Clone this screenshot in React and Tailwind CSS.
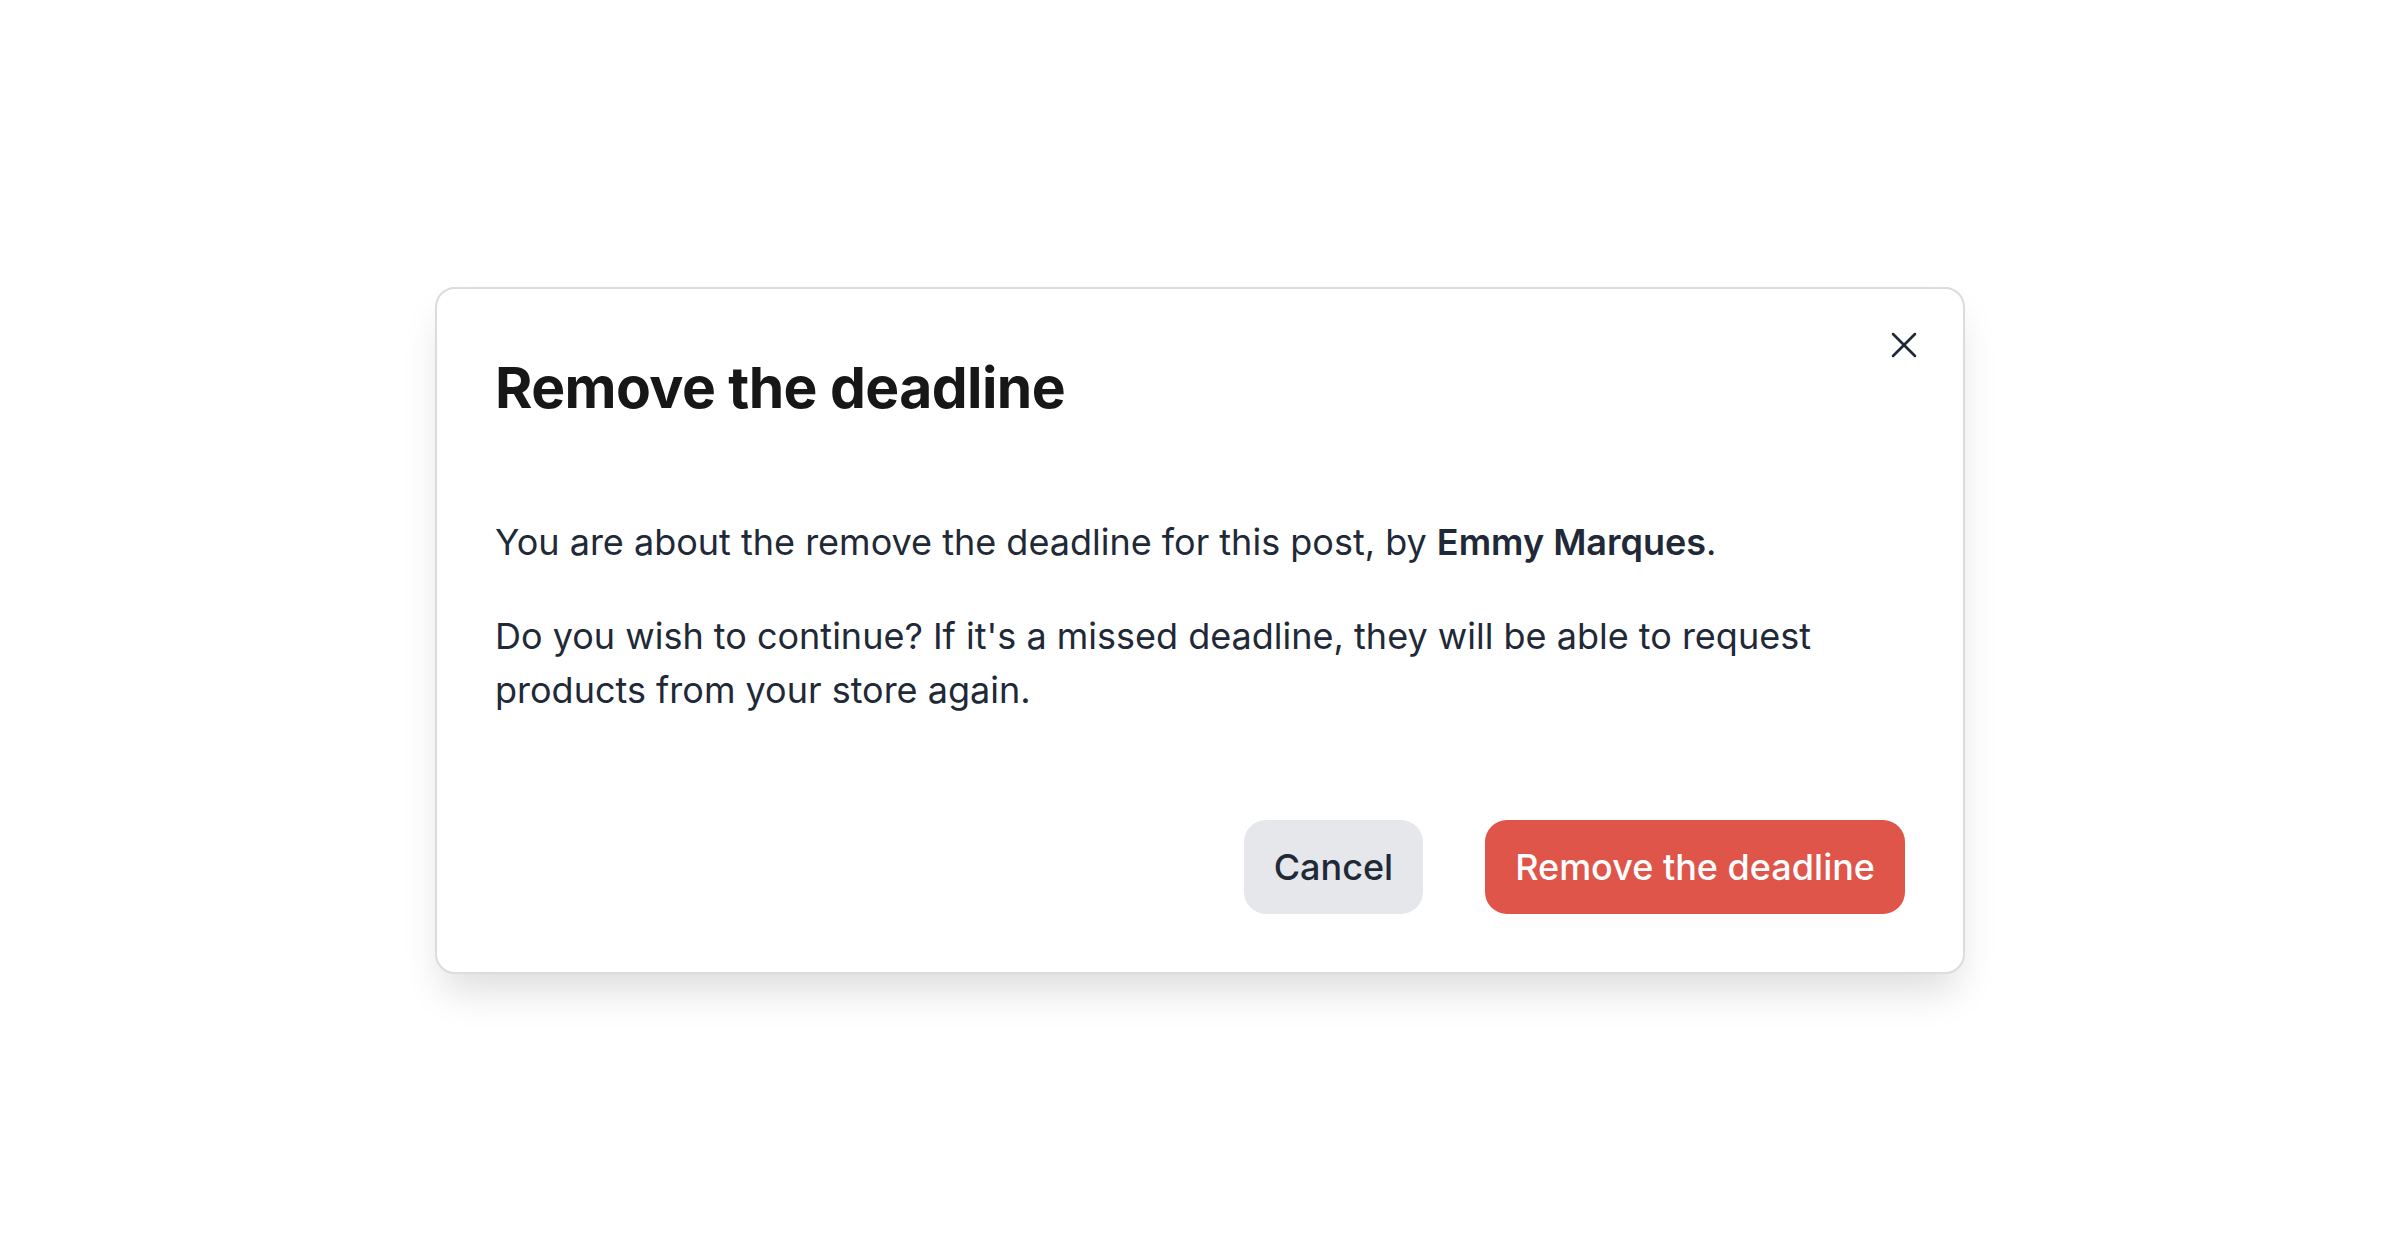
import { X } from 'lucide-react'

export default function App() {
  return (
    <div className="flex min-h-screen items-center justify-center bg-white font-['Inter',sans-serif]">
      <div className="relative w-[1530px] rounded-[20px] border-2 border-[#dcdcdc] bg-white px-[58px] pb-[58px] pt-[58px] shadow-[0_24px_40px_-8px_rgba(0,0,0,0.14)]">
        <button
          type="button"
          className="absolute right-[37px] top-[34px] text-[#1f2937]"
          aria-label="Close"
        >
          <X size={44} strokeWidth={1.4} />
        </button>

        <h2 className="mt-[5px] text-[57px] font-bold leading-[72px] tracking-[-0.01em] text-[#171717]">
          Remove the deadline
        </h2>

        <div className="mt-[91px] text-[36px] leading-[54px] text-[#1f2937]">
          <p>
            You are about the remove the deadline for this post, by{' '}
            <span className="font-semibold">Emmy Marques</span>.
          </p>
          <p className="mt-[40px]">
            Do you wish to continue? If it's a missed deadline, they will be able to request products from your store again.
          </p>
        </div>

        <div className="mt-[103px] flex justify-end gap-[62px]">
          <button
            type="button"
            className="h-[94px] rounded-[22px] bg-[#e5e7eb] px-[30px] text-[36px] font-medium text-[#1f2937]"
          >
            Cancel
          </button>
          <button
            type="button"
            className="h-[94px] rounded-[22px] bg-[#e0554a] px-[30px] text-[36px] font-medium text-white"
          >
            Remove the deadline
          </button>
        </div>
      </div>
    </div>
  )
}
